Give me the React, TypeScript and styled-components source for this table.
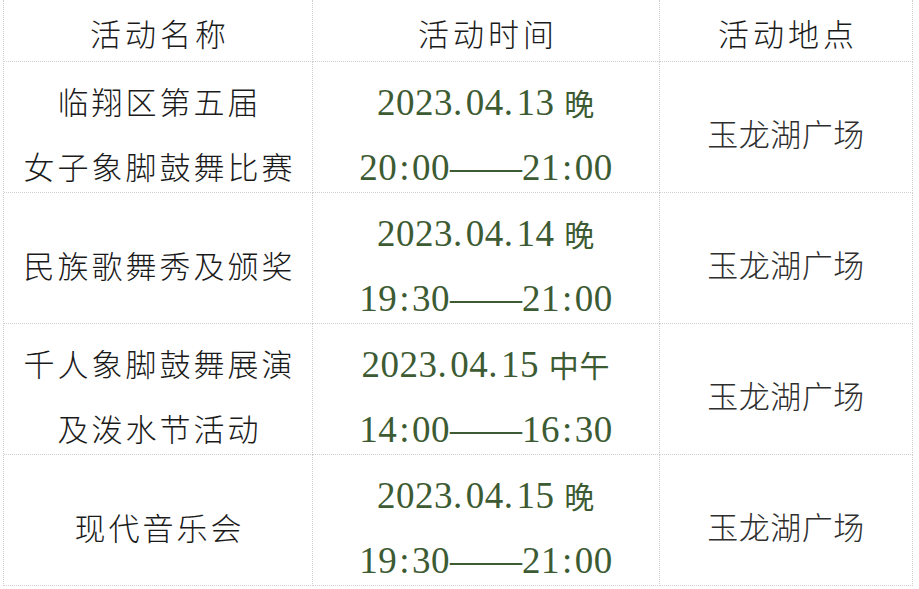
import React from "react";
import styled, { createGlobalStyle } from "styled-components";

const Global = createGlobalStyle`
  html, body { margin: 0; padding: 0; background: #ffffff; }
  body { width: 919px; height: 589px; overflow: hidden; }
`;

const Table = styled.div`
  display: grid;
  grid-template-columns: 309px 347px 253px;
  grid-template-rows: 62px repeat(4, 131px);
  margin-left: 3px;
  border-left: 1px dotted #cfcfcf;
  width: max-content;
`;

const Cell = styled.div<{ $top: number }>`
  box-sizing: border-box;
  display: flex;
  flex-direction: column;
  align-items: center;
  justify-content: center;
  padding-top: ${(p) => p.$top}px;
  border-right: 1px dotted #cfcfcf;
  border-bottom: 1px dotted #cfcfcf;
  text-align: center;
  white-space: nowrap;
`;

const HeadText = styled.div`
  font-family: "Noto Sans CJK SC", sans-serif;
  font-weight: 300;
  font-size: 31px;
  letter-spacing: 4px;
  margin-right: -4px;
  color: #1a1a1a;
  line-height: 40px;
`;

const NameLine = styled.div`
  font-family: "Noto Sans CJK SC", sans-serif;
  font-weight: 300;
  font-size: 31px;
  letter-spacing: 3px;
  margin-right: -3px;
  color: #1a1a1a;
  line-height: 65px;
`;

const TimeLine = styled.div`
  font-family: "Liberation Serif", "Noto Sans CJK SC", serif;
  font-size: 37px;
  letter-spacing: 0.5px;
  color: #3d5b33;
  line-height: 65px;
`;

const Dot = styled.span`
  padding-right: 3px;
`;

const Colon = styled.span`
  padding: 0 2px;
`;

const Dash = styled.span`
  letter-spacing: -2px;
  padding-right: 2px;
`;

const TimeSuffix = styled.span`
  font-family: "Noto Sans CJK SC", sans-serif;
  font-weight: 400;
  font-size: 30px;
  letter-spacing: 1px;
`;

const Place = styled.div`
  font-family: "Noto Sans CJK SC", sans-serif;
  font-weight: 300;
  font-size: 31px;
  letter-spacing: 0.5px;
  color: #2e2e2e;
  line-height: 65px;
`;

type Row = { name: string[]; date: string[]; suffix: string; from: string; to: string; place: string };

const rows: Row[] = [
  { name: ["临翔区第五届", "女子象脚鼓舞比赛"], date: ["2023", "04", "13"], suffix: "晚", from: "20:00", to: "21:00", place: "玉龙湖广场" },
  { name: ["民族歌舞秀及颁奖"], date: ["2023", "04", "14"], suffix: "晚", from: "19:30", to: "21:00", place: "玉龙湖广场" },
  { name: ["千人象脚鼓舞展演", "及泼水节活动"], date: ["2023", "04", "15"], suffix: "中午", from: "14:00", to: "16:30", place: "玉龙湖广场" },
  { name: ["现代音乐会"], date: ["2023", "04", "15"], suffix: "晚", from: "19:30", to: "21:00", place: "玉龙湖广场" },
];

function Clock({ value }: { value: string }) {
  const [h, m] = value.split(":");
  return (
    <>
      {h}
      <Colon>:</Colon>
      {m}
    </>
  );
}

export default function App() {
  return (
    <>
      <Global />
      <Table>
        <Cell $top={4}><HeadText>活动名称</HeadText></Cell>
        <Cell $top={4}><HeadText>活动时间</HeadText></Cell>
        <Cell $top={4}><HeadText>活动地点</HeadText></Cell>
        {rows.map((r, i) => (
          <React.Fragment key={i}>
            <Cell $top={12}>
              {r.name.map((n) => (
                <NameLine key={n}>{n}</NameLine>
              ))}
            </Cell>
            <Cell $top={16}>
              <TimeLine>
                {r.date[0]}
                <Dot>.</Dot>
                {r.date[1]}
                <Dot>.</Dot>
                {r.date[2]} <TimeSuffix>{r.suffix}</TimeSuffix>
              </TimeLine>
              <TimeLine>
                <Clock value={r.from} />
                <Dash>——</Dash>
                <Clock value={r.to} />
              </TimeLine>
            </Cell>
            <Cell $top={10}>
              <Place>{r.place}</Place>
            </Cell>
          </React.Fragment>
        ))}
      </Table>
    </>
  );
}
